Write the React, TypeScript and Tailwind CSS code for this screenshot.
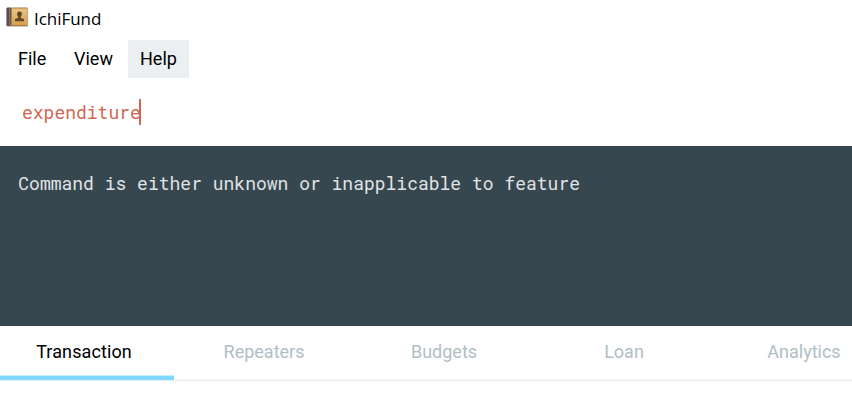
function BookIcon() {
  return (
    <svg className="ml-[6px] shrink-0" width="22" height="22" viewBox="0 0 22 22">
      <defs>
        <linearGradient id="cover" x1="0" y1="0" x2="0" y2="1">
          <stop offset="0" stopColor="#e9c582" />
          <stop offset="1" stopColor="#d9a14c" />
        </linearGradient>
      </defs>
      <rect x="0.5" y="2" width="21.5" height="19" rx="1" fill="#d3cec8" />
      <rect x="0.5" y="1.5" width="5" height="18.5" rx="1" fill="#5b4e4a" />
      <rect x="3" y="1.5" width="1.2" height="18" fill="#85756c" />
      <rect x="5.5" y="1.5" width="16" height="18.5" fill="#a9783b" />
      <rect x="6" y="2.5" width="15" height="16.5" fill="url(#cover)" />
      <path d="M13.5 5.5c1.7 0 2.4 1 2.4 2.5 0 1.2-.5 2-1.1 2.6v1.3l3.2 1.2v2.2H9v-2.2l3.2-1.2v-1.3c-.6-.6-1.1-1.4-1.1-2.6 0-1.5.8-2.5 2.4-2.5z" fill="#5b4628" />
    </svg>
  );
}

const menus = [
  { label: "File", box: "w-[61px] pl-[18px]" },
  { label: "View", box: "w-[67px] pl-[13px]" },
  { label: "Help", box: "w-[61px] pl-[12px] bg-[#eceff1]" },
];

const tabs = ["Transaction", "Repeaters", "Budgets", "Loan", "Analytics"];

export default function App() {
  return (
    <div className="h-[400px] w-[852px] overflow-hidden bg-white font-['Roboto',sans-serif] text-[18px] text-black">
      <header className="flex h-10 items-start pt-[6px]">
        <BookIcon />
        <span className="ml-[6px] font-['Open_Sans',sans-serif] text-[17px] leading-[26px] tracking-[-0.05px]">IchiFund</span>
      </header>
      <nav className="flex h-[38px] leading-[38px]">
        {menus.map((m) => (
          <div key={m.label} className={m.box}>{m.label}</div>
        ))}
      </nav>
      <div className="flex h-[68px] items-start pt-[21px] pl-[22px] font-['Roboto_Mono','DejaVu_Sans_Mono',monospace] leading-[26px] text-[#d06651]">
        <span className="w-[117px] whitespace-nowrap">expenditure</span>
        <span className="z-10 h-[26px] w-[2px] bg-[#d06651]" />
      </div>
      <main className="h-[180px] bg-[#37474f] pt-[25px] pl-[18px] font-['Roboto_Mono','DejaVu_Sans_Mono',monospace] leading-[24px] whitespace-nowrap text-[#e1e4e5]">
        <p className="translate-x-[0.3px] -translate-y-[0.5px]">Command is either unknown or inapplicable to feature</p>
      </main>
      <div className="-ml-[6px] flex h-[55px] w-[906px] border-b border-[#e8edf0] text-[#b0bec5]">
        {tabs.map((t, i) => (
          <div key={t} className="flex h-[54px] w-[180px] flex-col items-center leading-[52px]">
            <span className={i === 0 ? "h-[49px] tracking-[0.1px] text-black" : "h-[53px]"}>{t}</span>
            {i === 0 ? (
              <span className="h-[5px] w-full border-t border-[#c4ecff] bg-[#80d8ff]" />
            ) : (
              <span className="h-px w-full bg-[#f5f8f9]" />
            )}
          </div>
        ))}
      </div>
    </div>
  );
}
